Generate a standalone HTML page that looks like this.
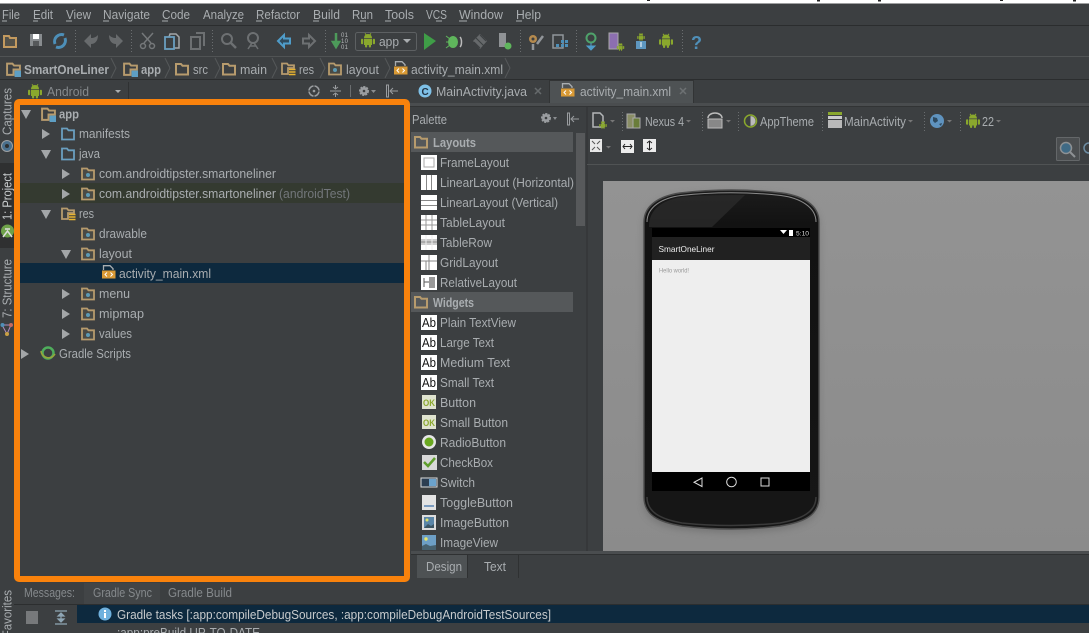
<!DOCTYPE html>
<html><head><meta charset="utf-8"><title>Android Studio</title>
<style>
html,body{margin:0;padding:0;background:#3c3f41;width:1089px;height:633px;overflow:hidden}
svg{display:block;position:absolute;left:0;top:0}
text{font-family:"Liberation Sans",sans-serif;font-size:13px;fill:#a9adb0}
.b{font-weight:bold}
.d{fill:#85898c}
.w{fill:#c8cbcd}
</style></head><body>
<svg width="1089" height="633" viewBox="0 0 1089 633" xmlns="http://www.w3.org/2000/svg">
<defs>
<symbol id="fld" viewBox="0 0 14 14"><path d="M1 12.5V2h5l1.500 1.800H13V12.500Z" fill="none" stroke="#b79b6d" stroke-width="2"/></symbol>
<symbol id="pkg" viewBox="0 0 14 14"><path d="M1 12.500V1.500h5l1.500 1.800H13V12.500Z" fill="#4a4a44" stroke="#b79b6d" stroke-width="1.800"/><circle cx="7" cy="8" r="2" fill="#5c9ab5"/></symbol>
<symbol id="src" viewBox="0 0 14 14"><path d="M1 12.500V1.500h5l1.500 1.800H13V12.500Z" fill="none" stroke="#6a9fc0" stroke-width="1.800"/></symbol>
<symbol id="mod" viewBox="0 0 14 14"><path d="M1 12V1.500h5l1.500 1.800H13V7H7V12Z" fill="none" stroke="#b79b6d" stroke-width="1.800"/><rect x="8" y="8" width="6" height="6" fill="#5e9fc4"/></symbol>
<symbol id="resf" viewBox="0 0 15 14"><path d="M1 12V1.500h5l1.500 1.800H13V6H7V12Z" fill="none" stroke="#b79b6d" stroke-width="1.800"/><path d="M8 7.500h6.500M8 10h6.500M8 12.500h6.500" stroke="#e8b430" stroke-width="1.600"/></symbol>
<symbol id="xml" viewBox="0 0 14 15"><path d="M1.500 5V.7H8l3 3V5" fill="none" stroke="#a9adb0" stroke-width="1.300"/><rect x="0" y="5.500" width="13.500" height="8" fill="#d99a35"/><path d="M5 7.500l-2 2 2 2M8.500 7.500l2 2-2 2" fill="none" stroke="#fff" stroke-width="1"/></symbol>
<symbol id="and" viewBox="0 0 14 15"><g fill="#8aa82d"><path d="M3 5a4 4 0 0 1 8 0Z"/><rect x="3" y="5.700" width="8" height="6.300"/><rect x="0" y="5.700" width="2.200" height="5.500" rx="1"/><rect x="11.800" y="5.700" width="2.200" height="5.500" rx="1"/><rect x="4" y="11" width="2.200" height="3.500" rx="1"/><rect x="7.800" y="11" width="2.200" height="3.500" rx="1"/></g><path d="M4 .3l1.400 2M10 .3L8.600 2.300" stroke="#8aa82d"/></symbol>
<linearGradient id="ph" x1="0" y1="0" x2="0" y2="1"><stop offset="0" stop-color="#1c1c1c"/><stop offset=".1" stop-color="#121212"/><stop offset="1" stop-color="#161616"/></linearGradient>
<linearGradient id="cv" x1="0" y1="0" x2="0" y2="1"><stop offset="0" stop-color="#939393"/><stop offset="1" stop-color="#8b8b8b"/></linearGradient>
<filter id="sh" x="-20%" y="-20%" width="140%" height="140%"><feGaussianBlur stdDeviation="4"/></filter>
</defs>

<rect width="1089" height="633" fill="#3c3f41"/>
<rect width="1089" height="3.500" fill="#fff"/>
<g fill="#222"><rect x="647" y="0" width="3" height="1"/><rect x="817" y="0" width="3" height="1.500"/><rect x="878" y="0" width="3" height="1.500"/><rect x="1000" y="0" width="3" height="1"/><rect x="1073" y="0" width="3" height="1.500"/></g>

<!-- menu -->
<rect y="25" width="1089" height="1" fill="#2b2d2e"/>
<g>
<text x="2" y="19" textLength="18" lengthAdjust="spacingAndGlyphs">File</text>
<text x="33" y="19" textLength="20" lengthAdjust="spacingAndGlyphs">Edit</text>
<text x="66" y="19" textLength="25" lengthAdjust="spacingAndGlyphs">View</text>
<text x="103" y="19" textLength="47" lengthAdjust="spacingAndGlyphs">Navigate</text>
<text x="162" y="19" textLength="28" lengthAdjust="spacingAndGlyphs">Code</text>
<text x="203" y="19" textLength="41" lengthAdjust="spacingAndGlyphs">Analyze</text>
<text x="256" y="19" textLength="44" lengthAdjust="spacingAndGlyphs">Refactor</text>
<text x="313" y="19" textLength="27" lengthAdjust="spacingAndGlyphs">Build</text>
<text x="352" y="19" textLength="21" lengthAdjust="spacingAndGlyphs">Run</text>
<text x="385" y="19" textLength="29" lengthAdjust="spacingAndGlyphs">Tools</text>
<text x="426" y="19" textLength="21" lengthAdjust="spacingAndGlyphs">VCS</text>
<text x="459" y="19" textLength="44" lengthAdjust="spacingAndGlyphs">Window</text>
<text x="516" y="19" textLength="25" lengthAdjust="spacingAndGlyphs">Help</text>
</g>
<g stroke="#a9adb0" stroke-width="1"><path d="M2 21h5M33 21h5M66 21h6M103 21h6M162 21h6M236 21h6M256 21h6M313 21h6M360 21h6M385 21h6M436 21h6M459 21h8M516 21h6"/></g>

<!-- toolbar -->
<rect y="56" width="1089" height="1" fill="#505354"/>
<g stroke="#6a6d6f" stroke-width="1" stroke-dasharray="1 2"><path d="M75.500 30V54M131.500 30V54M212.500 30V54M325.500 30V54M520.500 30V54M576.500 30V54M682.500 30V54"/></g>
<path d="M4 47V36h5l1 2h6v9Z" fill="#54524a" stroke="#c39a5f" stroke-width="2"/>
<path d="M30 34h12v12H30Z" fill="#888c8f"/><rect x="33" y="34" width="6" height="5" fill="#fff"/><rect x="33" y="41" width="6" height="5" fill="#55585a"/>
<path d="M55 44a7 7 0 0 1 9-9M65 38a7 7 0 0 1-9 9" fill="none" stroke="#4d8fb8" stroke-width="3"/>
<path d="M84 41l7-7v4c3 0 5-1 7-3 0 6-3 9-7 9v4Z" fill="#686b6d"/>
<path d="M123 41l-7-7v4c-3 0-5-1-7-3 0 6 3 9 7 9v4Z" fill="#686b6d"/>
<g stroke="#75787a" stroke-width="1.500" fill="none"><path d="M142 33l9 10M153 33l-9 10"/><circle cx="143" cy="46" r="2.500"/><circle cx="152" cy="46" r="2.500"/></g>
<path d="M170 34h6l3 3v11h-10V37Z" fill="none" stroke="#a4a7a9" stroke-width="1.500"/><rect x="165" y="37" width="9" height="12" fill="#3c3f41" stroke="#6a9fc0" stroke-width="1.800"/>
<path d="M196 33h8v13M191 37h9v12h-9Z" fill="none" stroke="#6d7072" stroke-width="2"/>
<circle cx="227" cy="39" r="5" fill="none" stroke="#6d7072" stroke-width="2"/><path d="M231 43l5 5" stroke="#6d7072" stroke-width="2.500"/>
<circle cx="253" cy="38" r="5" fill="none" stroke="#6d7072" stroke-width="2"/><path d="M248 49l4-6 2 0 4 6M250 46h6" stroke="#6d7072" stroke-width="1.500" fill="none"/>
<path d="M278 41l6-6v3.500h6v5h-6V47Z" fill="#2f4a5c" stroke="#4f9cc9" stroke-width="2"/>
<path d="M315 41l-6-6v3.500h-6v5h6V47Z" fill="none" stroke="#6d7072" stroke-width="2"/>
<path d="M336 33v9M333 42l3 5 3-5Z" stroke="#4d9a5a" stroke-width="2.500" fill="#4d9a5a"/>
<text x="341" y="37" style="font-size:6px;fill:#b5b8ba" textLength="7">01</text><text x="341" y="43" style="font-size:6px;fill:#b5b8ba" textLength="7">10</text><text x="341" y="49" style="font-size:6px;fill:#b5b8ba" textLength="7">01</text>
<rect x="355.500" y="32.500" width="61" height="18" rx="2" fill="none" stroke="#5d6062"/>
<use href="#and" x="361" y="33" width="14" height="15"/>
<text x="379" y="46" textLength="20" lengthAdjust="spacingAndGlyphs">app</text>
<path d="M403 39h8l-4 4Z" fill="#a9adb0"/>
<path d="M424 33l12 8-12 9Z" fill="#3f9d47"/>
<g fill="#5fb65c"><ellipse cx="453" cy="42" rx="5" ry="6"/><path d="M446 36l4 3M446 42h4M446 48l4-3" stroke="#5fb65c"/></g><path d="M460 37c2 2 2 8 0 10" stroke="#bbb" fill="none" stroke-width="1.500"/>
<path d="M473 41l7-7 7 7-7 8Z" fill="#66696b"/><path d="M476 38l8 8M480 35l6 6M474 42l6 6" stroke="#3c3f41"/>
<rect x="499" y="33" width="7" height="14" fill="#8f9295"/><circle cx="508" cy="46" r="3.500" fill="#5fb65c"/>
<circle cx="533" cy="39" r="4" fill="#b58a4e"/><circle cx="533" cy="39" r="1.500" fill="#3c3f41"/><path d="M533 44v6M537 44l6-8" stroke="#92969a" stroke-width="2.500"/>
<rect x="553" y="35" width="10" height="13" fill="none" stroke="#90969a" stroke-width="1.500"/><g fill="#4d8fb8"><rect x="561" y="40" width="3" height="3"/><rect x="565" y="40" width="3" height="3"/><rect x="561" y="44" width="3" height="3"/><rect x="565" y="44" width="3" height="3"/><rect x="556" y="44" width="3" height="3"/></g>
<circle cx="591" cy="38" r="4.500" fill="none" stroke="#4fa26b" stroke-width="2"/><path d="M591 43v5M587 46l4 4 4-4Z" fill="#4f9cc9" stroke="#4f9cc9"/>
<rect x="609" y="33" width="9" height="16" fill="#8c6fb0" stroke="#aaa"/><use href="#and" x="616" y="43" width="9" height="8"/>
<use href="#and" x="635" y="33" width="12" height="8"/><rect x="636" y="41" width="10" height="8" fill="#5e97c0"/><path d="M641 42v5" stroke="#fff"/>
<use href="#and" x="659" y="33" width="14" height="16"/>
<text x="691" y="49" class="b" style="font-size:18px;fill:#4f8fb8">?</text>

<!-- breadcrumbs -->
<rect y="79" width="1089" height="1" fill="#2b2d2e"/>
<use href="#mod" x="6" y="62" width="15" height="15"/>
<text x="24" y="74" class="b" textLength="85" lengthAdjust="spacingAndGlyphs">SmartOneLiner</text>
<use href="#mod" x="123" y="62" width="15" height="15"/>
<text x="141" y="74" class="b" textLength="20" lengthAdjust="spacingAndGlyphs">app</text>
<use href="#fld" x="175" y="62" width="14" height="14"/>
<text x="193" y="74" textLength="15" lengthAdjust="spacingAndGlyphs">src</text>
<use href="#fld" x="222" y="62" width="14" height="14"/>
<text x="240" y="74" textLength="27" lengthAdjust="spacingAndGlyphs">main</text>
<use href="#resf" x="281" y="62" width="15" height="14"/>
<text x="299" y="74" textLength="15" lengthAdjust="spacingAndGlyphs">res</text>
<use href="#pkg" x="328" y="62" width="14" height="14"/>
<text x="346" y="74" textLength="33" lengthAdjust="spacingAndGlyphs">layout</text>
<use href="#xml" x="394" y="61" width="14" height="15"/>
<text x="411" y="74" textLength="92" lengthAdjust="spacingAndGlyphs">activity_main.xml</text>
<g fill="none" stroke="#55585a"><path d="M111 58l5 10-5 10M165 58l5 10-5 10M215 58l5 10-5 10M272 58l5 10-5 10M320 58l5 10-5 10M385 58l5 10-5 10M505 58l5 10-5 10"/></g>

<!-- tool window header -->
<use href="#and" x="28" y="84" width="14" height="15"/>
<text x="47" y="96" class="d" textLength="42" lengthAdjust="spacingAndGlyphs">Android</text>
<path d="M115 90h6l-3 3Z" fill="#a9adb0"/>
<path d="M128.500 82V100" stroke="#2f3132"/>
<circle cx="314" cy="91" r="5" fill="none" stroke="#9a9da0" stroke-width="1.500"/><path d="M314 85v12M308 91h12" stroke="#3c3f41" stroke-width="1"/><circle cx="314" cy="91" r="1.300" fill="#9a9da0"/>
<path d="M330 91h11M335.500 85v4M333 87l2.500 2 2.500-2M335.500 97v-4M333 95l2.500-2 2.500 2" stroke="#9a9da0" fill="none"/>
<path d="M350.500 85V97" stroke="#6a6d6f"/>
<circle cx="364" cy="91" r="4" fill="#9a9da0" stroke="#9a9da0" stroke-dasharray="2 1" stroke-width="2"/><circle cx="364" cy="91" r="1.300" fill="#3c3f41"/><path d="M371 90h5l-2.500 3Z" fill="#8a8d90"/>
<path d="M386.500 85V97h2V85ZM398 91h-7M393 88l-3 3 3 3" stroke="#9a9da0" fill="none"/>

<!-- editor tabs -->
<circle cx="425" cy="91" r="6.500" fill="#7fc1e8"/><text x="421.500" y="95" class="b" style="font-size:10px;fill:#234">C</text>
<text x="436" y="96" textLength="91" lengthAdjust="spacingAndGlyphs">MainActivity.java</text>
<path d="M535 88l6 6M541 88l-6 6" stroke="#666a6c" stroke-width="1.500"/>
<rect x="550" y="80" width="143" height="23" fill="#4e5254"/>
<path d="M550 80.500h143M549.500 80v23M693.500 80v23" stroke="#323435" fill="none"/>
<use href="#xml" x="561" y="83" width="14" height="15"/>
<text x="580" y="96" textLength="91" lengthAdjust="spacingAndGlyphs">activity_main.xml</text>
<path d="M680 88l6 6M686 88l-6 6" stroke="#6d7173" stroke-width="1.500"/>
<rect x="410" y="103" width="679" height="3" fill="#4a4d4f"/>
<rect x="410" y="106" width="679" height="1" fill="#323435"/>

<!-- left strip -->
<rect x="0" y="163" width="14" height="85" fill="#2f3031"/>
<text transform="translate(11.500 135) rotate(-90)" textLength="47" lengthAdjust="spacingAndGlyphs">Captures</text>
<circle cx="7" cy="146" r="5.500" fill="#4a6f8c" stroke="#9ca0a3"/><circle cx="7" cy="146" r="2" fill="#2d2f30"/>
<text transform="translate(11.500 220) rotate(-90)" class="w" textLength="47" lengthAdjust="spacingAndGlyphs">1: Project</text>
<circle cx="7.500" cy="231" r="6.500" fill="#6fa24a"/><path d="M3 237l4.500-6 4.500 6M5 229h5" stroke="#ddd" fill="none" stroke-width="1.500"/>
<text transform="translate(11.500 318) rotate(-90)" textLength="59" lengthAdjust="spacingAndGlyphs">7: Structure</text>
<path d="M2 325l5 9 4-9Z" fill="none" stroke="#b08bc0"/><circle cx="2.500" cy="325" r="2" fill="#4f8fb8"/><circle cx="11" cy="325" r="2" fill="#c46a60"/><circle cx="7" cy="334" r="2" fill="#c89f45"/>
<text transform="translate(11.500 650) rotate(-90)" textLength="60" lengthAdjust="spacingAndGlyphs">2: Favorites</text>

<!-- project tree -->
<rect x="20" y="183" width="384" height="20" fill="#343a30"/>
<rect x="20" y="263" width="384" height="20" fill="#0d293e"/>
<g fill="#a3a6a8">
<path d="M21 110h10l-5 9Z"/>
<path d="M42 129l8 5-8 5Z"/>
<path d="M41 150h10l-5 9Z"/>
<path d="M62 169l8 5-8 5Z"/>
<path d="M62 189l8 5-8 5Z"/>
<path d="M41 210h10l-5 9Z"/>
<path d="M61 250h10l-5 9Z"/>
<path d="M62 289l8 5-8 5Z"/>
<path d="M62 309l8 5-8 5Z"/>
<path d="M62 329l8 5-8 5Z"/>
<path d="M21 349l8 5-8 5Z"/>
</g>
<use href="#mod" x="41" y="107" width="15" height="15"/>
<text x="59" y="118.500" class="b" textLength="20" lengthAdjust="spacingAndGlyphs">app</text>
<use href="#src" x="61" y="127" width="14" height="14"/>
<text x="79" y="138" textLength="51" lengthAdjust="spacingAndGlyphs">manifests</text>
<use href="#src" x="61" y="147" width="14" height="14"/>
<text x="79" y="158" textLength="21" lengthAdjust="spacingAndGlyphs">java</text>
<use href="#pkg" x="81" y="167" width="14" height="14"/>
<text x="99" y="178" textLength="177" lengthAdjust="spacingAndGlyphs">com.androidtipster.smartoneliner</text>
<use href="#pkg" x="81" y="187" width="14" height="14"/>
<text x="99" y="198" textLength="177" lengthAdjust="spacingAndGlyphs">com.androidtipster.smartoneliner</text>
<text x="279" y="198" textLength="71" lengthAdjust="spacingAndGlyphs" style="fill:#72767a">(androidTest)</text>
<use href="#resf" x="61" y="207" width="15" height="14"/>
<text x="79" y="218" textLength="15" lengthAdjust="spacingAndGlyphs">res</text>
<use href="#pkg" x="81" y="227" width="14" height="14"/>
<text x="99" y="238" textLength="48" lengthAdjust="spacingAndGlyphs">drawable</text>
<use href="#pkg" x="81" y="247" width="14" height="14"/>
<text x="99" y="258" textLength="33" lengthAdjust="spacingAndGlyphs">layout</text>
<use href="#xml" x="102" y="265" width="14" height="15"/>
<text x="119" y="278" textLength="92" lengthAdjust="spacingAndGlyphs">activity_main.xml</text>
<use href="#pkg" x="81" y="287" width="14" height="14"/>
<text x="99" y="298" textLength="31" lengthAdjust="spacingAndGlyphs">menu</text>
<use href="#pkg" x="81" y="307" width="14" height="14"/>
<text x="99" y="318" textLength="45" lengthAdjust="spacingAndGlyphs">mipmap</text>
<use href="#pkg" x="81" y="327" width="14" height="14"/>
<text x="99" y="338" textLength="33" lengthAdjust="spacingAndGlyphs">values</text>
<circle cx="48" cy="353" r="5.500" fill="none" stroke="#4fae5c" stroke-width="2.500"/><path d="M41 351a7.500 7.500 0 0 0 14 3" fill="none" stroke="#9aa53a" stroke-width="1.500"/>
<text x="59" y="358" textLength="72" lengthAdjust="spacingAndGlyphs">Gradle Scripts</text>

<!-- orange highlight -->
<rect x="17" y="102" width="390" height="477" rx="2" fill="none" stroke="#f9820c" stroke-width="6"/>

<!-- palette -->
<text x="412" y="124" textLength="35" lengthAdjust="spacingAndGlyphs">Palette</text>
<circle cx="546" cy="118" r="4" fill="#9a9da0" stroke="#9a9da0" stroke-dasharray="2 1" stroke-width="2"/><circle cx="546" cy="118" r="1.300" fill="#3c3f41"/><path d="M553 117h4l-2 3Z" fill="#8a8d90"/>
<path d="M567.500 113V125h2V113ZM579 119h-7M574 116l-3 3 3 3" stroke="#9a9da0" fill="none"/>
<rect x="411" y="132" width="162" height="20" fill="#55585a"/>
<rect x="411" y="292" width="162" height="20" fill="#55585a"/>
<rect x="576" y="133" width="9" height="93" fill="#57595b"/>
<rect x="586.500" y="107" width="1" height="444" fill="#303233"/>
<use href="#fld" x="414" y="135" width="14" height="14"/>
<use href="#fld" x="414" y="295" width="14" height="14"/>
<text x="433" y="147" class="b" textLength="43" lengthAdjust="spacingAndGlyphs">Layouts</text>
<text x="433" y="307" class="b" textLength="41" lengthAdjust="spacingAndGlyphs">Widgets</text>

<!-- palette icons -->
<g fill="#fff">
<rect x="421" y="155" width="16" height="15"/><rect x="421" y="175" width="16" height="15"/><rect x="421" y="195" width="16" height="15"/><rect x="421" y="215" width="16" height="15"/><rect x="421" y="235" width="16" height="15"/><rect x="421" y="255" width="16" height="15"/><rect x="421" y="275" width="16" height="15"/>
<rect x="421" y="315" width="16" height="15"/><rect x="421" y="335" width="16" height="15"/><rect x="421" y="355" width="16" height="15"/><rect x="421" y="375" width="16" height="15"/>
</g>
<rect x="424" y="158" width="10" height="9" fill="none" stroke="#aaa"/>
<path d="M426.500 175v15M431.500 175v15M421 200.500h16M421 205.500h16" stroke="#888" fill="none"/>
<path d="M421 220h16M421 225h16M426 215v15M432 215v15" stroke="#999" fill="none"/>
<rect x="421" y="239" width="16" height="6" fill="#aaa"/><path d="M421 240h16M421 244h16M426 235v15M432 235v15" stroke="#eee" fill="none"/>
<path d="M421 261h16M429 255v15M426 261v9" stroke="#888" fill="none"/>
<path d="M424 278v9M424 282h5" stroke="#555" fill="none"/><rect x="429" y="277" width="6" height="11" fill="#999"/>
<g>
<text x="422" y="327" style="font-size:12.500px;fill:#111" textLength="14" lengthAdjust="spacingAndGlyphs">Ab</text>
<text x="422" y="347" style="font-size:12.500px;fill:#111" textLength="14" lengthAdjust="spacingAndGlyphs">Ab</text>
<text x="422" y="367" style="font-size:12.500px;fill:#111" textLength="14" lengthAdjust="spacingAndGlyphs">Ab</text>
<text x="422" y="387" style="font-size:12.500px;fill:#111" textLength="14" lengthAdjust="spacingAndGlyphs">Ab</text>
</g>
<rect x="422" y="395" width="14" height="14" fill="#dfe3cf"/><text x="423" y="406" class="b" style="font-size:9px;fill:#8aa82d" textLength="12" lengthAdjust="spacingAndGlyphs">OK</text>
<rect x="422" y="415" width="14" height="14" fill="#dfe3cf"/><text x="423" y="426" class="b" style="font-size:9px;fill:#8aa82d" textLength="12" lengthAdjust="spacingAndGlyphs">OK</text>
<circle cx="429" cy="442" r="7" fill="#e6e6e6"/><circle cx="429" cy="442" r="4.500" fill="#6aa820"/>
<rect x="422" y="455" width="15" height="15" fill="#d8d8d8"/><path d="M424 462l4 4 7-8" fill="none" stroke="#5f9e2c" stroke-width="2.500"/>
<rect x="421" y="478" width="16" height="9" fill="#2c3e52" stroke="#ddd"/><rect x="429" y="479" width="7" height="7" fill="#6ba2cc"/>
<rect x="422" y="495" width="14" height="15" fill="#e4e4e4"/><rect x="424" y="505" width="10" height="2" fill="#7b9cc0"/>
<rect x="422" y="515" width="14" height="15" fill="#ddd"/><rect x="424" y="517" width="10" height="11" fill="#5b86a8"/><circle cx="427" cy="520" r="1.500" fill="#dde26a"/><path d="M424 528l4-4 3 2 3-2v4Z" fill="#3d5563"/>
<rect x="422" y="535" width="14" height="15" fill="#6d9fc6"/><circle cx="426" cy="539" r="1.700" fill="#e8e66a"/><path d="M422 550v-4l4-2 4 2 6-1v5Z" fill="#47616f"/>

<!-- palette labels -->
<text x="440" y="167" textLength="69" lengthAdjust="spacingAndGlyphs">FrameLayout</text>
<text x="440" y="187" textLength="134" lengthAdjust="spacingAndGlyphs">LinearLayout (Horizontal)</text>
<text x="440" y="207" textLength="118" lengthAdjust="spacingAndGlyphs">LinearLayout (Vertical)</text>
<text x="440" y="227" textLength="65" lengthAdjust="spacingAndGlyphs">TableLayout</text>
<text x="440" y="247" textLength="52" lengthAdjust="spacingAndGlyphs">TableRow</text>
<text x="440" y="267" textLength="58" lengthAdjust="spacingAndGlyphs">GridLayout</text>
<text x="440" y="287" textLength="77" lengthAdjust="spacingAndGlyphs">RelativeLayout</text>
<text x="440" y="327" textLength="76" lengthAdjust="spacingAndGlyphs">Plain TextView</text>
<text x="440" y="347" textLength="54" lengthAdjust="spacingAndGlyphs">Large Text</text>
<text x="440" y="367" textLength="70" lengthAdjust="spacingAndGlyphs">Medium Text</text>
<text x="440" y="387" textLength="54" lengthAdjust="spacingAndGlyphs">Small Text</text>
<text x="440" y="407" textLength="36" lengthAdjust="spacingAndGlyphs">Button</text>
<text x="440" y="427" textLength="68" lengthAdjust="spacingAndGlyphs">Small Button</text>
<text x="440" y="447" textLength="66" lengthAdjust="spacingAndGlyphs">RadioButton</text>
<text x="440" y="467" textLength="53" lengthAdjust="spacingAndGlyphs">CheckBox</text>
<text x="440" y="487" textLength="35" lengthAdjust="spacingAndGlyphs">Switch</text>
<text x="440" y="507" textLength="73" lengthAdjust="spacingAndGlyphs">ToggleButton</text>
<text x="440" y="527" textLength="69" lengthAdjust="spacingAndGlyphs">ImageButton</text>
<text x="440" y="547" textLength="58" lengthAdjust="spacingAndGlyphs">ImageView</text>

<!-- design toolbar -->
<rect x="587" y="164" width="502" height="1" fill="#505354"/>
<g stroke="#6a6d6f" stroke-dasharray="1 2"><path d="M622.500 112V132M702.500 112V132M738.500 112V132M822.500 112V132M924.500 112V132M960.500 112V132"/></g>
<path d="M593 113h7l3 3v11h-10Z" fill="none" stroke="#b3b6b8" stroke-width="1.500"/><use href="#and" x="598" y="121" width="10" height="8"/>
<path d="M610 120h5l-2.500 2.500Z" fill="#777"/>
<rect x="627" y="114" width="8" height="14" fill="#8a8e66" stroke="#aaa"/><rect x="633" y="118" width="7" height="10" fill="#6a7d3a" stroke="#aaa"/>
<text x="645" y="126" textLength="39" lengthAdjust="spacingAndGlyphs">Nexus 4</text>
<path d="M686 120h5l-2.500 2.500Z" fill="#777"/>
<rect x="708" y="119" width="14" height="9" fill="#888" stroke="#bbb"/><path d="M708 118a7 5 0 0 1 14 0" fill="none" stroke="#bbb" stroke-width="1.500"/>
<path d="M726 120h5l-2.500 2.500Z" fill="#777"/>
<circle cx="750.500" cy="121" r="6" fill="#3c3f41" stroke="#8aa82d" stroke-width="1.500"/><path d="M750.500 116a5 5 0 0 1 0 10Z" fill="#bbb"/>
<text x="760" y="126" textLength="54" lengthAdjust="spacingAndGlyphs">AppTheme</text>
<rect x="828" y="112" width="14" height="3" fill="#8aa82d"/><rect x="828" y="116" width="14" height="3" fill="#ccc"/><rect x="828" y="120" width="14" height="8" fill="#b9b9b9"/>
<text x="844" y="126" textLength="62" lengthAdjust="spacingAndGlyphs">MainActivity</text>
<path d="M908 120h5l-2.500 2.500Z" fill="#777"/>
<circle cx="937" cy="121" r="7" fill="#5f93bf"/><path d="M933 117l4 1 1 3-3 2-2-2ZM939 124l3-1-1 3Z" fill="#2e4a60"/>
<path d="M947 120h5l-2.500 2.500Z" fill="#777"/>
<use href="#and" x="966" y="113" width="14" height="16"/>
<text x="982" y="126" textLength="12" lengthAdjust="spacingAndGlyphs">22</text>
<path d="M996 120h5l-2.500 2.500Z" fill="#777"/>
<rect x="590" y="139" width="12" height="13" fill="#e8e8e8"/><path d="M592 141l3 3M600 141l-3 3M592 150l3-3M600 150l-3-3" stroke="#555"/>
<path d="M606 146h5l-2.500 2.500Z" fill="#777"/>
<rect x="621" y="140" width="13" height="13" fill="#ececec"/><path d="M623 146.500h9M625 144l-2 2.500 2 2.500M630 144l2 2.500-2 2.500" stroke="#222" fill="none"/>
<rect x="643" y="139" width="13" height="13" fill="#ececec"/><path d="M649.500 141v9M647 143l2.500-2 2.500 2M647 148l2.500 2 2.500-2" stroke="#222" fill="none"/>
<rect x="1056.500" y="137.500" width="23" height="23" rx="1" fill="#4b4e50" stroke="#646769"/>
<circle cx="1066" cy="148" r="5.500" fill="#3f6a85" stroke="#8d9194" stroke-width="1.500"/><path d="M1070 152l5 5" stroke="#8d9194" stroke-width="2"/>
<circle cx="1089" cy="148" r="5" fill="none" stroke="#6d8da3" stroke-width="1.500"/>

<!-- canvas -->
<rect x="603" y="181" width="486" height="370" fill="url(#cv)"/>
<path d="M644 222C644 205 660 196 680 193Q731 187 782 193C803 196 819 205 819 222V497C819 515 805 522 780 526Q731 532 682 526C658 522 644 515 644 497Z" fill="#555" filter="url(#sh)" opacity=".45" transform="translate(0 3)"/>
<path d="M644 222C644 205 660 196 680 193Q731 187 782 193C803 196 819 205 819 222V497C819 515 805 522 780 526Q731 532 682 526C658 522 644 515 644 497Z" fill="url(#ph)" stroke="#4e4e4e" stroke-width="1.400"/>
<path d="M647 222C647 207 662 198 681 195.500Q731 190 781 195.500C800 198 816 207 816 222" fill="none" stroke="#8a8a8a" stroke-width="1"/>
<path d="M647 497C647 512 660 519 682 523Q731 528 780 523C802 519 816 512 816 497" fill="none" stroke="#3a3a3a" stroke-width="1.500"/>
<path d="M649 226C649 209 663 200 682 197Q700 195 745 195L712 227H649Z" fill="#2a2a2a" opacity=".8"/>
<rect x="652" y="228" width="158" height="9" fill="#000"/>
<rect x="652" y="237" width="158" height="23" fill="#212121"/>
<rect x="652" y="260" width="158" height="212" fill="#eeeeee"/>
<rect x="652" y="472" width="158" height="19" fill="#000"/>
<path d="M780 230h7l-3.500 4Z" fill="#fff"/><rect x="789" y="230" width="4" height="6" fill="#fff"/>
<text x="796" y="235.500" style="font-size:6px;fill:#ddd" textLength="13" lengthAdjust="spacingAndGlyphs">5:10</text>
<text x="658.500" y="252" style="font-size:8.500px;fill:#eee" textLength="56" lengthAdjust="spacingAndGlyphs">SmartOneLiner</text>
<text x="659" y="272.500" style="font-size:6px;fill:#999" textLength="30" lengthAdjust="spacingAndGlyphs">Hello world!</text>
<path d="M702 478v8.500l-8-4.250Z" fill="none" stroke="#ddd"/>
<circle cx="731.500" cy="482" r="4.800" fill="none" stroke="#ddd"/>
<rect x="761" y="478" width="8" height="8" fill="none" stroke="#ddd"/>

<!-- bottom tabs -->
<rect x="411" y="551" width="678" height="4" fill="#4a4d4f"/>
<rect x="411" y="554" width="678" height="1" fill="#2f3132"/>
<rect x="417" y="555" width="50" height="23" fill="#4e5254"/>
<path d="M467.500 555v23M518.500 555v23" stroke="#2f3132"/>
<text x="426" y="571" textLength="36" lengthAdjust="spacingAndGlyphs">Design</text>
<text x="484" y="571" textLength="22" lengthAdjust="spacingAndGlyphs">Text</text>

<!-- messages -->
<rect x="14" y="604" width="1075" height="1" fill="#2c2e2f"/>
<text x="24" y="597" class="d" textLength="51" lengthAdjust="spacingAndGlyphs">Messages:</text>
<rect x="84" y="583" width="76" height="21" fill="#424547"/>
<text x="93" y="597" textLength="59" lengthAdjust="spacingAndGlyphs" class="d">Gradle Sync</text>
<text x="168" y="597" textLength="64" lengthAdjust="spacingAndGlyphs" class="d">Gradle Build</text>
<rect x="77" y="605" width="1012" height="18" fill="#0d293e"/>
<rect x="26" y="611" width="12" height="13" fill="#77797b"/>
<path d="M55 611h12M55 624h12M61 613v9M58 616l3-3 3 3ZM58 619l3 3 3-3Z" stroke="#8ea6b5" stroke-width="1.200" fill="#8ea6b5"/>
<circle cx="105" cy="614" r="6.500" fill="#6fb1de"/><rect x="104" y="610" width="2" height="2" fill="#fff"/><rect x="104" y="613" width="2" height="5" fill="#fff"/>
<text x="117" y="619" textLength="434" lengthAdjust="spacingAndGlyphs" class="w">Gradle tasks [:app:compileDebugSources, :app:compileDebugAndroidTestSources]</text>
<text x="117" y="637" textLength="143" lengthAdjust="spacingAndGlyphs">:app:preBuild UP-TO-DATE</text>
</svg>
</body></html>
